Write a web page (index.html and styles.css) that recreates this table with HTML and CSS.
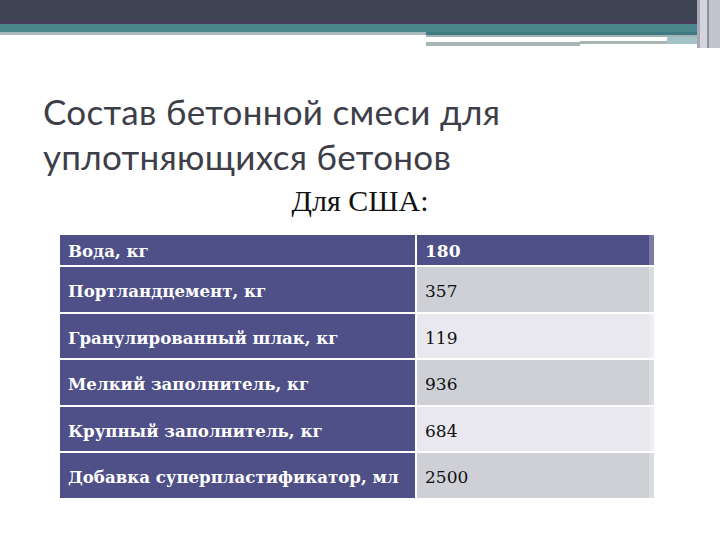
FILE: index.html
```html
<!DOCTYPE html>
<html lang="ru">
<head>
<meta charset="utf-8">
<link rel="stylesheet" href="styles.css">
</head>
<body>
<div class="slide">
  <svg class="topbar" width="720" height="50" viewBox="0 0 720 50" xmlns="http://www.w3.org/2000/svg">
    <rect x="0" y="0" width="720" height="24" fill="#3f4455"/>
    <rect x="0" y="20" width="720" height="4" fill="#463f57"/>
    <rect x="0" y="24" width="700" height="8" fill="#4a878c"/>
    <rect x="0" y="32" width="426" height="3" fill="#a7b8bd"/>
    <rect x="426" y="32" width="274" height="3" fill="#417a80"/>
    <rect x="426" y="35" width="274" height="2" fill="#a2b3b6"/>
    <rect x="426" y="37" width="241" height="4" fill="#ffffff"/>
    <rect x="667" y="37" width="33" height="7" fill="#a3c3c6"/>
    <rect x="580" y="41" width="87" height="3" fill="#a9b6b6"/>
    <rect x="426" y="42" width="154" height="4" fill="#a9b6b6"/>
    <rect x="697" y="0" width="3" height="48" fill="#a8a8b8"/>
    <rect x="700" y="0" width="8" height="48" fill="#d4d4dc"/>
    <rect x="707" y="0" width="2" height="48" fill="#8e8e9e"/>
    <rect x="709" y="0" width="11" height="48" fill="#c3c3cf"/>
  </svg>

  <h1 class="title">Состав бетонной смеси для<br>уплотняющихся бетонов</h1>
  <p class="subtitle">Для США:</p>

  <div class="table">
    <div class="cell name head">Вода, кг</div>
    <div class="cell val head">180</div>

    <div class="cell name">Портландцемент, кг</div>
    <div class="cell val dark">357</div>

    <div class="cell name">Гранулированный шлак, кг</div>
    <div class="cell val light">119</div>

    <div class="cell name">Мелкий заполнитель, кг</div>
    <div class="cell val dark">936</div>

    <div class="cell name">Крупный заполнитель, кг</div>
    <div class="cell val light">684</div>

    <div class="cell name">Добавка суперпластификатор, мл</div>
    <div class="cell val dark">2500</div>
  </div>
</div>
</body>
</html>
```

FILE: styles.css
```css
html, body {
  margin: 0;
  padding: 0;
  background: #ffffff;
}

.slide {
  width: 720px;
  height: 540px;
  overflow: hidden;
  background: #ffffff;
}

.topbar {
  display: block;
}

.title {
  margin: 39px 0 0 43px;
  font-family: "Lato", "Open Sans", sans-serif;
  font-weight: 400;
  font-size: 35px;
  line-height: 45px;
  color: #3e3e48;
  letter-spacing: 0.3px;
}

.subtitle {
  margin: 4px 0 0 0;
  text-align: center;
  font-family: "Liberation Serif", serif;
  font-size: 30px;
  line-height: 36px;
  color: #111111;
}

.table {
  margin: 16px 0 0 60px;
  display: grid;
  grid-template-columns: 355px 237px;
  grid-template-rows: 30px repeat(5, 44.5px);
  column-gap: 2px;
  row-gap: 2px;
  width: 594px;
}

.cell {
  display: flex;
  align-items: center;
  padding: 4px 8px 0 8px;
  font-family: "DejaVu Serif", "Liberation Serif", serif;
  font-size: 16.6px;
}

.cell.head {
  padding-top: 2px;
}

.name {
  background: #4f5088;
  color: #ffffff;
  font-weight: 700;
}

.val {
  color: #111111;
  font-size: 17px;
  box-shadow: inset -5px 0 0 rgba(255, 255, 255, 0.25);
}

.val.head {
  background: #4f5088;
  color: #ffffff;
  font-weight: 700;
}

.val.dark {
  background: #cfd0d6;
}

.val.light {
  background: #e8e8ee;
}
```
